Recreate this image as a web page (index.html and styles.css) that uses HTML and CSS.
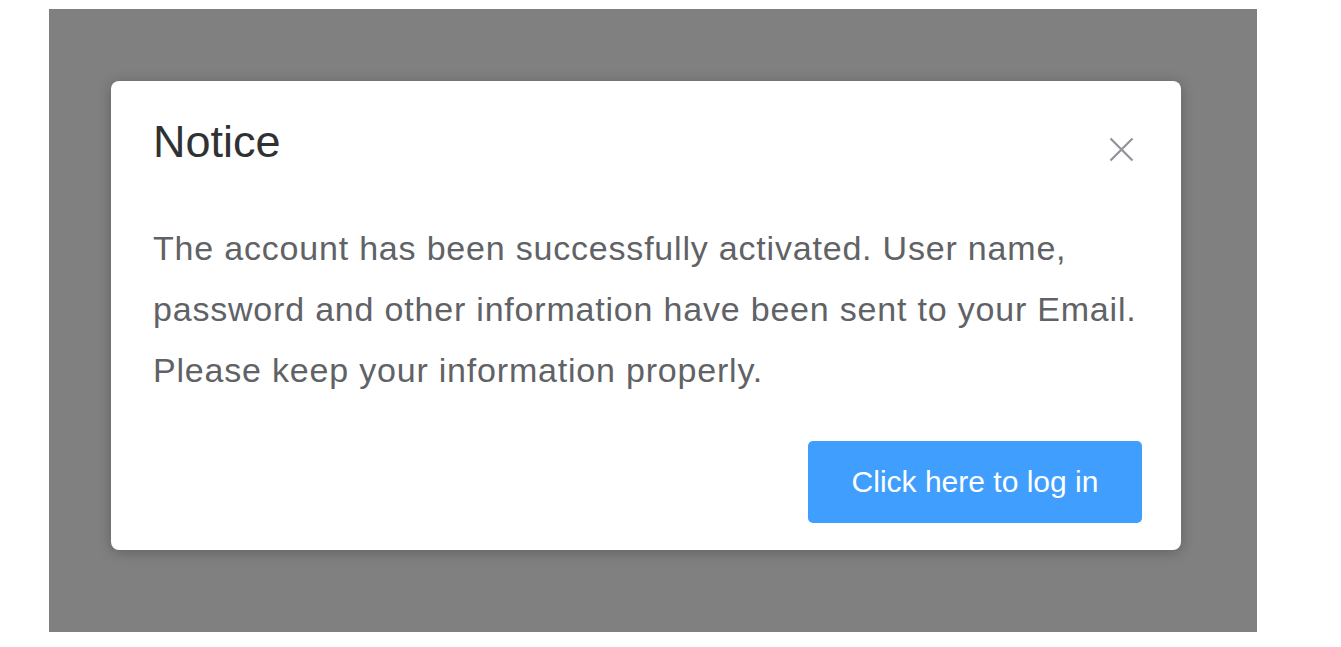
FILE: index.html
```html
<!DOCTYPE html>
<html lang="en">
<head>
<meta charset="utf-8">
<title>Notice</title>
<link rel="stylesheet" href="styles.css">
</head>
<body>
<div class="overlay">
  <div class="dialog">
    <div class="dialog-header">
      <span class="dialog-title">Notice</span>
      <button class="dialog-close" aria-label="Close">
        <svg width="25" height="25" viewBox="0 0 25 25"><path d="M1.5 1.5 L23.5 23.5 M23.5 1.5 L1.5 23.5" stroke="#909399" stroke-width="2.2" fill="none"/></svg>
      </button>
    </div>
    <div class="dialog-body">The account has been successfully activated. User name, password and other information have been sent to your Email. Please keep your information properly.</div>
    <div class="dialog-footer">
      <button class="btn-primary">Click here to log in</button>
    </div>
  </div>
</div>
</body>
</html>
```
FILE: styles.css
```css
html, body {
  margin: 0;
  padding: 0;
  background: #ffffff;
}
body {
  font-family: "Liberation Sans", Arial, sans-serif;
}
.overlay {
  margin: 9px 0 0 49px;
  width: 1208px;
  height: 623px;
  background: #808080;
  padding: 72px 0 0 62px;
  box-sizing: border-box;
}
.dialog {
  position: relative;
  width: 1070px;
  height: 469px;
  background: #ffffff;
  border-radius: 8px;
  box-shadow: 0 2px 14px rgba(0, 0, 0, 0.25);
  box-sizing: border-box;
  padding: 34px 39px 27px 42px;
  display: flex;
  flex-direction: column;
}
.dialog-header {
  height: 54px;
}
.dialog-title {
  font-size: 45px;
  line-height: 54px;
  color: #303133;
}
.dialog-close {
  position: absolute;
  top: 56px;
  right: 47px;
  width: 25px;
  height: 25px;
  padding: 0;
  border: 0;
  background: transparent;
  display: block;
}
.dialog-close svg {
  display: block;
}
.dialog-body {
  margin-top: 49px;
  font-size: 34px;
  line-height: 61px;
  letter-spacing: 0.8px;
  color: #606266;
}
.dialog-footer {
  margin-top: auto;
  display: flex;
  justify-content: flex-end;
}
.btn-primary {
  width: 334px;
  height: 82px;
  background: #409eff;
  border: 0;
  border-radius: 5px;
  color: #ffffff;
  font-family: "Liberation Sans", Arial, sans-serif;
  font-size: 30px;
  padding: 0;
}
```
